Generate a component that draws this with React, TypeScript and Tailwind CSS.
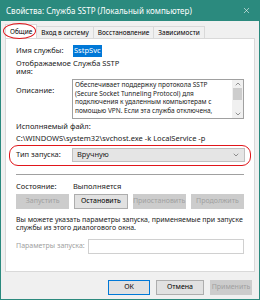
import { X, ChevronUp, ChevronDown } from 'lucide-react';

const font = { fontFamily: '"Noto Sans", "Open Sans", sans-serif' };

function Btn({ label, disabled, primary }: { label: string; disabled?: boolean; primary?: boolean }) {
  return (
    <div
      className={`flex h-[15px] items-center justify-center border text-[7px] ${
        primary ? 'border-[#0078d7] bg-[#e1e1e1]' : disabled ? 'border-[#cccccc] bg-[#cccccc] text-[#a0a0a0]' : 'border-[#adadad] bg-[#e1e1e1] text-black'
      }`}
    >
      {label}
    </div>
  );
}

export default function App() {
  return (
    <div className="h-[300px] w-[260px] overflow-hidden bg-[#2b8a7e] text-black" style={font}>
      {/* Title bar */}
      <div className="flex h-[21px] items-center justify-between pl-[6px] pr-[9px] text-[8px] text-white">
        <span>Свойства: Служба SSTP (Локальный компьютер)</span>
        <X className="h-[9px] w-[9px]" strokeWidth={1.5} />
      </div>

      <div className="mx-[1px] h-[278px] bg-[#f0f0f0] px-[4px] pt-[3px]">
        {/* Tabs */}
        <div className="flex h-[14px] items-end text-[6.5px]">
          <div className="relative flex h-[14px] items-center border border-b-0 border-[#d9d9d9] bg-white px-[4px]">
            Общие
            <div className="absolute -left-[3px] -top-[2px] h-[16px] w-[33px] rounded-[50%] border-[1.5px] border-[#e0161b]" />
          </div>
          <div className="flex h-[12px] items-center border-t border-r border-[#d9d9d9] px-[4px]">Вход в систему</div>
          <div className="flex h-[12px] items-center border-t border-r border-[#d9d9d9] px-[4px]">Восстановление</div>
          <div className="flex h-[12px] items-center border-t border-r border-[#d9d9d9] px-[4px]">Зависимости</div>
        </div>

        {/* Panel */}
        <div className="flex h-[234px] flex-col border border-[#d9d9d9] bg-white px-[10px] pt-[6px] text-[7.5px] text-[#1a1a1a]">
          <div className="flex h-[12px] items-center">
            <span className="w-[57px]">Имя службы:</span>
            <span className="bg-[#0078d7] px-[1px] text-white">SstpSvc</span>
          </div>
          <div className="mt-[2px] flex">
            <span className="w-[57px] leading-[8px]">Отображаемое имя:</span>
            <span className="leading-[8px]">Служба SSTP</span>
          </div>
          <div className="mt-[4px] flex">
            <span className="w-[56px] pt-[6px]">Описание:</span>
            <div className="flex h-[40px] flex-1 border border-[#a0a0a0]">
              <div className="flex-1 px-[2px] pt-[1px] text-[6.5px] leading-[8.5px]">
                Обеспечивает поддержку протокола SSTP (Secure Socket Tunneling Protocol) для подключения к удаленным компьютерам с помощью VPN. Если эта служба отключена,
              </div>
              <div className="flex w-[11px] flex-col items-center bg-[#f0f0f0] text-[#606060]">
                <ChevronUp className="h-[8px] w-[8px]" />
                <div className="h-[12px] w-[9px] bg-[#cdcdcd]" />
                <div className="flex-1" />
                <ChevronDown className="h-[8px] w-[8px]" />
              </div>
            </div>
          </div>
          <div className="mt-[2px]">Исполняемый файл:</div>
          <div className="mt-[1px]">C:\WINDOWS\system32\svchost.exe -k LocalService -p</div>

          <div className="-mx-[7px] flex h-[21px] items-center rounded-[9px] border-[1.5px] border-[#e0161b] pl-[6px] pr-[5px]">
            <span className="w-[56px]">Тип запуска:</span>
            <div className="flex h-[14px] flex-1 items-center justify-between border border-[#c0c0c0] bg-[#e5e5e5] px-[4px]">
              <span>Вручную</span>
              <ChevronDown className="h-[8px] w-[8px] text-[#606060]" />
            </div>
          </div>

          <div className="mt-[8px] h-px bg-[#a0a0a0]" />

          <div className="mt-[6px] flex">
            <span className="w-[57px]">Состояние:</span>
            <span>Выполняется</span>
          </div>
          <div className="mt-[2px] grid grid-cols-4 gap-[5px]">
            <Btn label="Запустить" disabled />
            <Btn label="Остановить" />
            <Btn label="Приостановить" disabled />
            <Btn label="Продолжить" disabled />
          </div>

          <div className="mt-[7px] whitespace-nowrap text-[7px] leading-[8px]">
            Вы можете указать параметры запуска, применяемые при запуске
            <br />
            службы из этого диалогового окна.
          </div>
          <div className="mt-[7px] flex items-center">
            <span className="w-[72px] whitespace-nowrap text-[7px] text-[#a0a0a0]">Параметры запуска:</span>
            <div className="h-[15px] flex-1 border border-[#d0d0d0]" />
          </div>
        </div>

        {/* Bottom buttons */}
        <div className="mt-[8px] flex justify-end gap-[6px] pr-[3px]">
          <div className="w-[42px]"><Btn label="ОК" primary /></div>
          <div className="w-[48px]"><Btn label="Отмена" /></div>
          <div className="w-[42px]"><Btn label="Применить" disabled /></div>
        </div>
      </div>
    </div>
  );
}
